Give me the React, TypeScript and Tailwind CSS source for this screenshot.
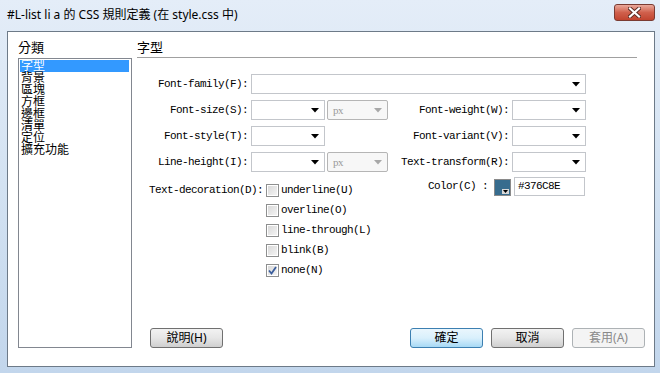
import React from 'react';

const CJK = '"Noto Sans", "Noto Sans CJK TC", sans-serif';
const MONO = '"Liberation Mono", "Noto Sans CJK TC", monospace';

const Arrow: React.FC<{ disabled?: boolean }> = ({ disabled }) => (
  <svg width="8" height="5" viewBox="0 0 8 5" className="shrink-0">
    <polygon points="0,0 8,0 4,4.5" fill={disabled ? '#a8a8a8' : '#000'} />
  </svg>
);

const Select: React.FC<{ w: string; text?: string; disabled?: boolean }> = ({ w, text, disabled }) => (
  <div
    className={`${w} h-[20px] flex items-center justify-between pl-[5px] pr-[5px] border ${
      disabled ? 'border-[#b5b5b5] bg-[#f7f7f7] rounded-[2px] text-[#9a9a9a]' : 'border-[#c3c6cb] bg-white'
    }`}
  >
    <span className="text-[11px] tracking-[-0.6px]" style={{ fontFamily: '"Liberation Serif", serif' }}>
      {text}
    </span>
    <Arrow disabled={disabled} />
  </div>
);

const Label: React.FC<{ w: string; children: React.ReactNode }> = ({ w, children }) => (
  <div className={`${w} text-right text-[11px] tracking-[-0.6px] text-black whitespace-nowrap`} style={{ fontFamily: MONO }}>
    {children}
  </div>
);

const Check: React.FC<{ label: string; checked?: boolean }> = ({ label, checked }) => (
  <div className="h-[20px] flex items-center">
    <div className="w-[13px] h-[13px] border border-[#8e8f8f] p-[1px] bg-white">
      <div className="w-full h-full bg-gradient-to-br from-[#d9d9d9] to-[#f4f4f4] flex items-center justify-center">
        {checked && (
          <svg width="9" height="9" viewBox="0 0 9 9">
            <path d="M1 4.5 L3.5 7.5 L8 1" stroke="#3a5d9c" strokeWidth="1.8" fill="none" />
          </svg>
        )}
      </div>
    </div>
    <span className="ml-[2px] text-[11px] tracking-[-0.6px] text-black" style={{ fontFamily: MONO }}>
      {label}
    </span>
  </div>
);

const Button: React.FC<{ label: string; variant?: 'default' | 'primary' | 'disabled' }> = ({
  label,
  variant = 'default',
}) => {
  const styles =
    variant === 'primary'
      ? 'border-[#3c7fb1] bg-gradient-to-b from-[#eaf6fd] via-[#d9f0fc] to-[#a7d9f5] text-black'
      : variant === 'disabled'
      ? 'border-[#adb2b5] bg-[#f4f4f4] text-[#8a8a8a]'
      : 'border-[#707070] bg-gradient-to-b from-[#f2f2f2] via-[#e6e6e6] to-[#cfcfcf] text-black';
  return (
    <div
      className={`w-[73px] h-[20px] rounded-[3px] border flex items-center justify-center text-[12px] leading-none ${styles}`}
      style={{ fontFamily: CJK }}
    >
      {label}
    </div>
  );
};

const categories = ['字型', '背景', '區塊', '方框', '邊框', '清單', '定位', '擴充功能'];

const App: React.FC = () => {
  return (
    <div className="w-[660px] h-[373px] overflow-hidden flex flex-col bg-gradient-to-b from-[#e4edf8] via-[#d3e2f2] to-[#c2d6ec]" style={{ fontFamily: CJK }}>
      {/* title bar */}
      <div className="h-[31px] shrink-0 flex items-start pl-[7px] pr-[5px]">
        <div className="mt-[6px] text-[12px] leading-[18px] text-black whitespace-nowrap">
          #L-list li a 的 CSS 規則定義 (在 style.css 中)
        </div>
        <div className="ml-auto mt-[4px] w-[41px] h-[17px] rounded-[3px] border border-[#7a3b32] bg-gradient-to-b from-[#e9a99b] via-[#d0604c] to-[#c1442f] flex items-center justify-center">
          <svg width="13" height="11" viewBox="0 0 13 11">
            <path d="M2 1.5 L11 9.5 M11 1.5 L2 9.5" stroke="#5a2a22" strokeWidth="4" strokeLinecap="square" />
            <path d="M2 1.5 L11 9.5 M11 1.5 L2 9.5" stroke="#fff" strokeWidth="2.2" strokeLinecap="square" />
          </svg>
        </div>
      </div>

      {/* client area */}
      <div className="ml-[7px] w-[648px] h-[336px] border border-[#6d7a88] bg-white flex pb-[18px]">
        {/* left: categories */}
        <div className="ml-[10px] w-[114px] flex flex-col">
          <div className="mt-[7px] h-[16px] text-[13px] leading-[16px] text-black">分類</div>
          <div className="mt-[3px] flex-1 border border-[#828790] p-[1px] pr-[2px]">
            {categories.map((c, i) => (
              <div
                key={c}
                className={`h-[12px] text-[12px] leading-[12px] pl-[1px] ${i === 0 ? 'bg-[#3399ff] text-white' : 'text-black'}`}
              >
                {c}
              </div>
            ))}
          </div>
        </div>

        {/* right: form */}
        <div className="ml-[5px] flex-1 flex flex-col">
          <div className="mt-[7px] h-[16px] text-[13px] leading-[16px] text-black">字型</div>
          <div className="mt-[2px] w-[500px] h-px bg-[#a0a0a0]" />

          <div className="mt-[16px] flex flex-col gap-[6px]">
            <div className="flex items-center h-[20px]">
              <Label w="w-[111px]">Font-family(F):</Label>
              <div className="ml-[3px]">
                <Select w="w-[335px]" />
              </div>
            </div>
            <div className="flex items-center h-[20px]">
              <Label w="w-[111px]">Font-size(S):</Label>
              <div className="ml-[3px]">
                <Select w="w-[74px]" />
              </div>
              <div className="ml-[2px]">
                <Select w="w-[61px]" text="px" disabled />
              </div>
              <Label w="w-[121px]">Font-weight(W):</Label>
              <div className="ml-[3px]">
                <Select w="w-[74px]" />
              </div>
            </div>
            <div className="flex items-center h-[20px]">
              <Label w="w-[111px]">Font-style(T):</Label>
              <div className="ml-[3px]">
                <Select w="w-[74px]" />
              </div>
              <div className="w-[63px]" />
              <Label w="w-[121px]">Font-variant(V):</Label>
              <div className="ml-[3px]">
                <Select w="w-[74px]" />
              </div>
            </div>
            <div className="flex items-center h-[20px]">
              <Label w="w-[111px]">Line-height(I):</Label>
              <div className="ml-[3px]">
                <Select w="w-[74px]" />
              </div>
              <div className="ml-[2px]">
                <Select w="w-[61px]" text="px" disabled />
              </div>
              <Label w="w-[121px]">Text-transform(R):</Label>
              <div className="ml-[3px]">
                <Select w="w-[74px]" />
              </div>
            </div>
          </div>

          {/* decoration + color */}
          <div className="mt-[5px] flex">
            <div className="w-[291px] flex mt-[3px]">
              <div className="ml-[10px] w-[116px] h-[20px] flex items-center justify-end">
                <Label w="w-auto">Text-decoration(D):</Label>
              </div>
              <div className="ml-[3px] flex flex-col">
                <Check label="underline(U)" />
                <Check label="overline(O)" />
                <Check label="line-through(L)" />
                <Check label="blink(B)" />
                <Check label="none(N)" checked />
              </div>
            </div>
            <div className="flex items-start">
              <div className="h-[19px] flex items-center">
                <Label w="w-auto">Color(C) :</Label>
              </div>
              <div className="ml-[6px] mt-[2px] w-[17px] h-[17px] border border-[#8a8a8a] bg-[#376c8e] flex items-end justify-end">
                <svg width="7" height="5" viewBox="0 0 7 5" className="mb-[1px] mr-[1px]">
                  <rect width="7" height="5" fill="#d8d8d8" />
                  <polygon points="1,1 6,1 3.5,4" fill="#000" />
                </svg>
              </div>
              <div className="ml-[3px] w-[71px] h-[19px] border border-[#c3c6cb] flex items-center pl-[3px]">
                <span className="text-[11px] tracking-[-0.6px] text-black" style={{ fontFamily: MONO }}>
                  #376C8E
                </span>
              </div>
            </div>
          </div>

          {/* buttons */}
          <div className="mt-auto flex items-center pl-[13px] pr-[9px]">
            <Button label="說明(H)" />
            <div className="ml-auto flex gap-[8px]">
              <Button label="確定" variant="primary" />
              <Button label="取消" />
              <Button label="套用(A)" variant="disabled" />
            </div>
          </div>
        </div>
      </div>
    </div>
  );
};

export default App;
